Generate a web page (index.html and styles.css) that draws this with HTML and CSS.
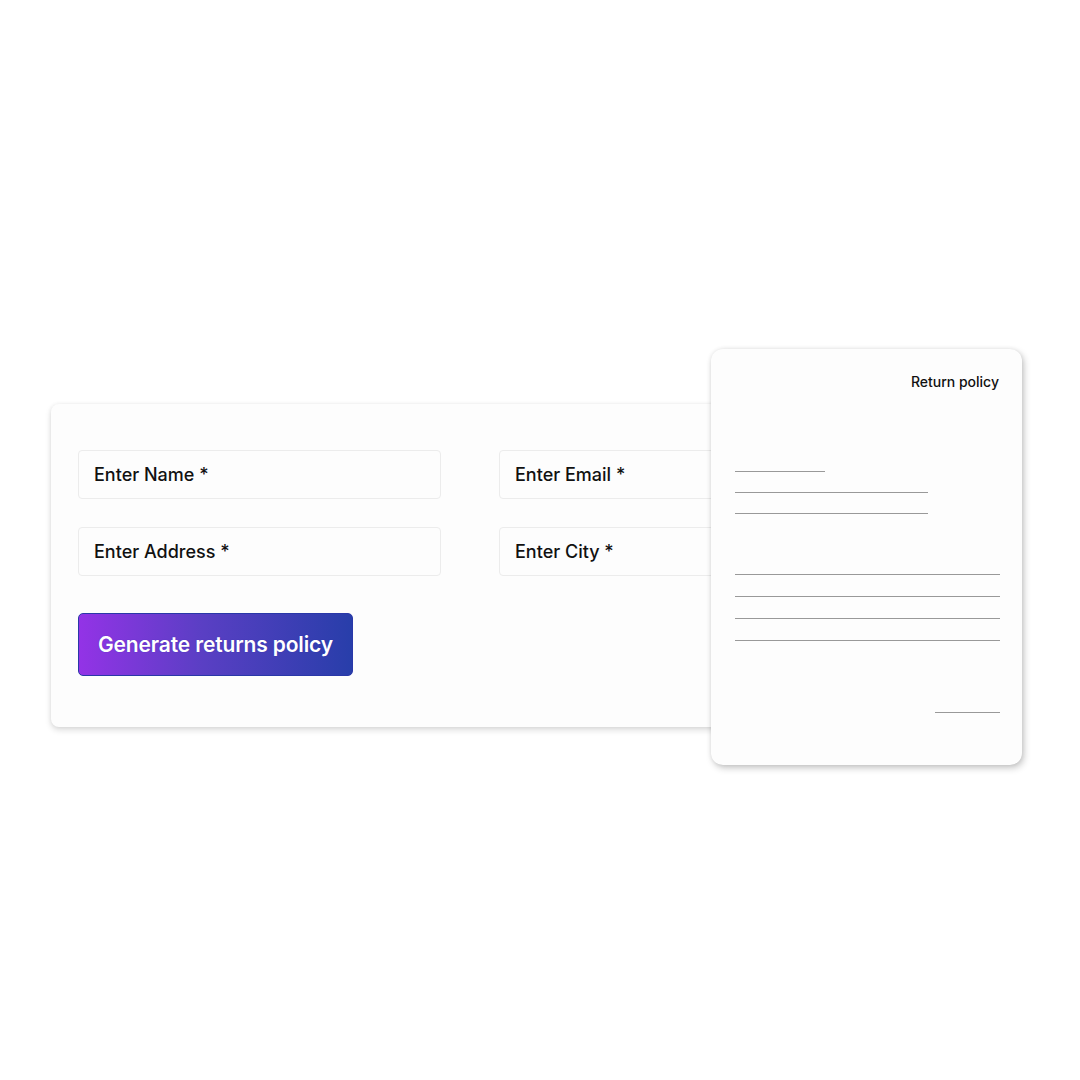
FILE: index.html
```html
<!DOCTYPE html>
<html>
<head>
<meta charset="utf-8">
<link rel="stylesheet" href="styles.css">
</head>
<body>
<div class="stage">
  <div class="form-card">
    <div class="fields">
      <div class="field">Enter Name *</div>
      <div class="field">Enter Email *</div>
      <div class="field">Enter Address *</div>
      <div class="field">Enter City *</div>
    </div>
    <button class="btn">Generate returns policy</button>
  </div>
  <div class="doc-card">
    <div class="doc-title">Return policy</div>
    <div class="doc-group top">
      <div class="line w90"></div>
      <div class="line w193"></div>
      <div class="line w193"></div>
    </div>
    <div class="doc-group body">
      <div class="line full"></div>
      <div class="line full"></div>
      <div class="line full"></div>
      <div class="line full"></div>
    </div>
    <div class="doc-sign">
      <div class="line w65"></div>
    </div>
  </div>
</div>
</body>
</html>
```
FILE: styles.css
```css
html, body {
  margin: 0;
  padding: 0;
  background: #ffffff;
}
body {
  width: 1080px;
  height: 1080px;
  font-family: Inter, "Noto Sans", sans-serif;
}
.stage {
  position: relative;
  width: 1080px;
  height: 1080px;
}
.form-card {
  position: absolute;
  left: 51px;
  top: 404px;
  width: 900px;
  height: 323px;
  box-sizing: border-box;
  padding: 46px 27px 0 27px;
  background: #fdfdfd;
  border-radius: 8px;
  box-shadow: 0 3px 6px rgba(0,0,0,0.14), 0 0 4px rgba(0,0,0,0.06);
}
.fields {
  display: grid;
  grid-template-columns: 363px 363px;
  column-gap: 58px;
  row-gap: 28px;
}
.field {
  height: 49px;
  box-sizing: border-box;
  border: 1px solid #ececec;
  border-radius: 4px;
  background: #fdfdfd;
  padding-left: 15px;
  display: flex;
  align-items: center;
  font-size: 18px;
  font-weight: 500;
  color: #111;
}
.btn {
  margin-top: 37px;
  width: 275px;
  height: 63px;
  border: 1px solid #2a38a8;
  border-radius: 5px;
  background: linear-gradient(90deg, #9333e6 0%, #5a3fc4 45%, #283eaa 100%);
  color: #fff;
  font-family: Inter, "Noto Sans", sans-serif;
  font-size: 21px;
  font-weight: 600;
  padding: 0;
  letter-spacing: -0.15px;
  text-shadow: 0 0 1px rgba(30,30,160,0.6);
}
.doc-card {
  position: absolute;
  left: 711px;
  top: 349px;
  width: 311px;
  height: 416px;
  box-sizing: border-box;
  padding: 24px 22px 0 24px;
  background: #fdfdfd;
  border-radius: 12px;
  box-shadow: 2px 3px 7px rgba(0,0,0,0.22), 0 0 4px rgba(0,0,0,0.08);
}
.doc-title {
  text-align: right;
  font-size: 14px;
  font-weight: 500;
  color: #111;
  line-height: 17px;
  padding-right: 1px;
}
.doc-group {
  display: flex;
  flex-direction: column;
  gap: 20px;
}
.doc-group.top {
  margin-top: 81px;
}
.doc-group.body {
  margin-top: 60px;
  gap: 21px;
}
.line {
  height: 1px;
  background: #999;
}
.w90 { width: 90px; }
.w193 { width: 193px; }
.full { width: 265px; }
.w65 { width: 65px; }
.doc-sign {
  display: flex;
  justify-content: flex-end;
  margin-top: 71px;
}
```
